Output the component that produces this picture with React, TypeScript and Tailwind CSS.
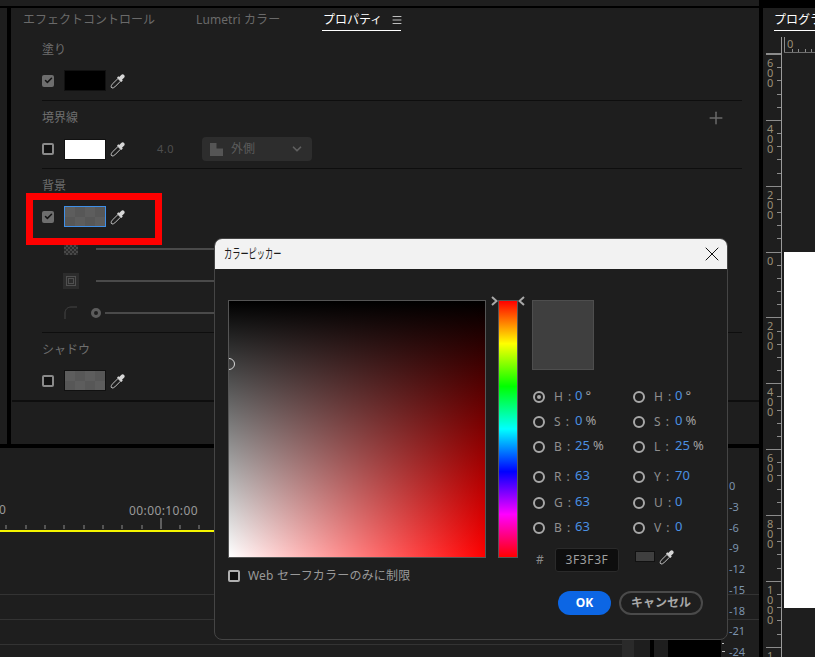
import React from "react";
import { X, Check, ChevronDown, Plus, Menu } from "lucide-react";

const Eyedropper = ({ className = "" }: { className?: string }) => (
  <svg viewBox="0 0 16 16" className={"w-[16px] h-[16px] shrink-0 " + className}>
    <path d="M2 15 L1.2 14.2 C1 13 1.5 12 2.2 11.2 L8 5.5 L10.6 8.1 L4.8 13.9 C4 14.6 3 15.1 2 15 Z" fill="none" stroke="#c4c4c4" strokeWidth="1" />
    <path d="M7 4.6 L8.4 3.2 L9.2 4 L11.2 2 C12 1.2 13.2 1 14.1 1.9 C15 2.8 14.8 4 14 4.8 L12 6.8 L12.8 7.6 L11.4 9 Z" fill="#d6d6d6" />
  </svg>
);

const Checkbox = ({ checked, light }: { checked?: boolean; light?: boolean }) =>
  checked ? (
    <div className="w-[12px] h-[12px] rounded-[2px] bg-[#6e6e6e] flex items-center justify-center shrink-0">
      <Check size={9} strokeWidth={4} className="text-[#151515]" />
    </div>
  ) : (
    <div className={"w-[12px] h-[12px] rounded-[2px] border-2 bg-[#111111] shrink-0 " + (light ? "border-[#b0b0b0]" : "border-[#8a8a8a]")} />
  );

// the checkered swatch
const Swatch = ({ active }: { active?: boolean }) => (
  <div
    className={
      "w-[42px] h-[21px] shrink-0 border bg-[#5a5a5a] bg-[conic-gradient(#575757_25%,#5d5d5d_0_50%,#575757_0_75%,#5d5d5d_0)] bg-[length:20px_20px] " +
      (active ? "border-[#3f8fe8]" : "border-[#111111]")
    }
  />
);

const Label = ({ children }: { children: React.ReactNode }) => (
  <div className="h-[16px] leading-[16px] text-[12px] text-[#6f6f6f]">{children}</div>
);

const Line = () => <div className="h-px bg-[#0e0e0e] w-[700px]" />;

const Ruler = ({ n }: { n: string }) => (
  <div className="h-[65.85px] shrink-0 border-t border-[#8c8c8c] w-[15px] flex">
    <div className="flex-1 flex flex-col pt-[3px] pl-[1px]">
      {n.split("").map((c, i) => (
        <span key={i} className="h-[10px] leading-[10px] text-[11px] text-[#9a8f78]">
          {c}
        </span>
      ))}
    </div>
    <div className="w-[4px] flex flex-col pt-[12.2px] gap-[12.2px]">
      {[0, 1, 2, 3].map((t) => (
        <div key={t} className="h-px bg-[#8c8c8c]" />
      ))}
    </div>
  </div>
);

const Field = ({ k, v, u, on }: { k: string; v: string; u?: string; on?: boolean }) => (
  <div className="flex items-center h-[16px] w-[100px]">
    <div className="w-[12px] h-[12px] rounded-full border-[2.5px] border-[#a8a8a8] bg-[#1e1e1e] flex items-center justify-center shrink-0">
      {on && <div className="w-[4px] h-[4px] rounded-full bg-[#a8a8a8]" />}
    </div>
    <span className="ml-[9px] text-[12px] text-[#8f8f8f] w-[21px] tracking-[1px] whitespace-nowrap">{k} :</span>
    <span className="-mt-[2px] text-[13px] text-[#4a90e2]">{v}</span>
    {u && <span className="-mt-[2px] ml-[3px] text-[13px] text-[#a0a0a0]">{u}</span>}
  </div>
);

const ticks = [6, 26, 45, 64, 84, 103, 122, 142, 180, 199];
const meter = ["0", "-3", "-6", "-9", "-12", "-15", "-18", "-21", "-24"];

const ColorPicker = () => (
  <div className="absolute left-[214px] top-[238px] w-[514px] h-[402px] rounded-[8px] border border-[#454545] bg-[#1e1e1e] overflow-hidden">
    <div className="h-[30px] bg-[#f2f2f2] flex items-center justify-between pl-[9px] pr-[3px]">
      <span className="text-[13px] text-[#1a1a1a] origin-left scale-x-[0.63] whitespace-nowrap">カラーピッカー</span>
      <X size={24} strokeWidth={1} className="text-[#111111]" />
    </div>
    <div className="flex pl-[13px] pt-[31px]">
      <div className="w-[258px]">
        <div className="relative w-[258px] h-[258px] border border-[#555555] overflow-hidden bg-[linear-gradient(to_bottom,#000,transparent),linear-gradient(to_right,#fff,#f00)]">
          <div className="absolute left-[-6px] top-[57px] w-[12px] h-[12px] rounded-full border-[1.5px] border-[#d8d8d8]" />
        </div>
        <div className="flex items-center mt-[11px] h-[14px]">
          <Checkbox light />
          <span className="ml-[8px] text-[12px] text-[#999999] tracking-[0.2px] whitespace-nowrap">Web セーフカラーのみに制限</span>
        </div>
      </div>
      <div className="relative ml-[12px] w-[20px] h-[258px] border border-[#555555] bg-[linear-gradient(to_bottom,#f00,#ff0,#0f0,#0ff,#00f,#f0f,#f00)]">
        <svg viewBox="0 0 7 10" className="absolute left-[-8px] top-[-5px] w-[7px] h-[10px]">
          <path d="M1 1L5.5 5L1 9" fill="none" stroke="#a8a8a8" strokeWidth="2" />
        </svg>
        <svg viewBox="0 0 7 10" className="absolute left-[19px] top-[-5px] w-[7px] h-[10px]">
          <path d="M6 1L1.5 5L6 9" fill="none" stroke="#a8a8a8" strokeWidth="2" />
        </svg>
      </div>
      <div className="ml-[14px] w-[181px]">
        <div className="w-[62px] h-[70px] bg-[#3f3f3f] border border-[#4e4e4e]" />
        <div className="mt-[19px] ml-[1px] grid grid-cols-[100px_100px] gap-y-[9px]">
          <Field k="H" v="0" u="°" on />
          <Field k="H" v="0" u="°" />
          <Field k="S" v="0" u="%" />
          <Field k="S" v="0" u="%" />
          <Field k="B" v="25" u="%" />
          <Field k="L" v="25" u="%" />
        </div>
        <div className="mt-[14px] ml-[1px] grid grid-cols-[100px_100px] gap-y-[9.5px]">
          <Field k="R" v="63" />
          <Field k="Y" v="70" />
          <Field k="G" v="63" />
          <Field k="U" v="0" />
          <Field k="B" v="63" />
          <Field k="V" v="0" />
        </div>
        <div className="flex items-center mt-[12px] h-[24px]">
          <span className="ml-[4px] w-[19px] text-[12px] text-[#8a8a8a]">#</span>
          <div className="w-[64px] h-[24px] rounded-[3px] bg-[#0e0e0e] border border-[#2a2a2a] flex items-center justify-center text-[12px] text-[#a0a0a0] tracking-[0.6px]">
            3F3F3F
          </div>
          <div className="ml-[16px] -mt-[7px] w-[20px] h-[11px] bg-[#3f3f3f] border border-[#111111]" />
          <Eyedropper className="ml-[4px] -mt-[6px]" />
        </div>
        <div className="flex mt-[19px] ml-[26px] gap-[8px]">
          <div className="w-[53px] h-[24px] rounded-full bg-[#0c66e4] flex items-center justify-center text-[12px] font-bold text-white">OK</div>
          <div className="w-[84px] h-[24px] rounded-full border-2 border-[#4a4a4a] flex items-center justify-center text-[12px] font-bold text-[#a8a8a8]">キャンセル</div>
        </div>
      </div>
    </div>
  </div>
);

export default function App() {
  return (
    <div
      className="relative w-[815px] h-[657px] bg-black overflow-hidden flex"
      style={{ fontFamily: '"Noto Sans", "Noto Sans CJK JP", sans-serif' }}
    >
      <div className="w-[759px] shrink-0 flex flex-col">
        <div className="h-[6px] bg-[#1e1e1e] shrink-0" />
        <div className="h-[436px] mt-[2px] flex shrink-0">
          <div className="w-[7px] bg-[#1e1e1e]" />
          <div className="ml-[4px] w-[748px] bg-[#1e1e1e]">
            <div className="h-[24px] flex items-start pt-[3px] pl-[12px] text-[12px] leading-[17px] text-[#6a6a6a]">
              <span className="w-[173px] whitespace-nowrap">エフェクトコントロール</span>
              <span className="w-[126px] tracking-[0.1px] whitespace-nowrap">Lumetri カラー</span>
              <div className="flex items-start border-b border-white h-[20px] w-[79px]">
                <span className="pl-[1px] text-white whitespace-nowrap">プロパティ</span>
                <Menu size={12} className="ml-[9px] mt-[3px] shrink-0 text-[#bdbdbd]" />
              </div>
            </div>
            <div className="pl-[31px] pt-[10px]">
              <Label>塗り</Label>
              <div className="flex items-center h-[21px] mt-[12px]">
                <Checkbox checked />
                <div className="ml-[10px] w-[42px] h-[21px] bg-black border border-[#111111]" />
                <Eyedropper className="ml-[4px]" />
              </div>
              <div className="mt-[9px]"><Line /></div>
              <div className="mt-[9px] flex justify-between w-[684px]">
                <Label>境界線</Label>
                <Plus size={20} strokeWidth={1.8} className="-mt-[2px] text-[#6a6a6a]" />
              </div>
              <div className="flex items-center h-[24px] mt-[9px]">
                <Checkbox />
                <div className="ml-[10px] w-[42px] h-[21px] bg-white border border-[#111111]" />
                <Eyedropper className="ml-[4px]" />
                <span className="ml-[31px] text-[11px] text-[#4e4e4e] tracking-[0.5px]">4.0</span>
                <div className="ml-[28px] w-[110px] h-[24px] rounded-[4px] bg-[#2d2d2d] flex items-center px-[8px] text-[12px] text-[#5c5c5c]">
                  <svg viewBox="0 0 12 12" className="w-[13px] h-[13px] shrink-0">
                    <path d="M0 0H6V5H12V12H0Z" fill="#555555" />
                  </svg>
                  <span className="ml-[8px]">外側</span>
                  <ChevronDown size={14} strokeWidth={3} className="ml-auto text-[#5f5f5f]" />
                </div>
              </div>
              <div className="mt-[7px]"><Line /></div>
              <div className="mt-[9px]"><Label>背景</Label></div>
              <div className="flex items-center h-[21px] mt-[12px]">
                <Checkbox checked />
                <div className="ml-[10px]"><Swatch active /></div>
                <Eyedropper className="ml-[4px]" />
              </div>
              <div className="flex items-center h-[22px] mt-[11px] pl-[22px]">
                <div className="w-[14px] h-[12px] bg-[conic-gradient(#2c2c2c_25%,#484848_0_50%,#2c2c2c_0_75%,#484848_0)] bg-[length:4px_4px]" />
                <div className="ml-[18px] w-[150px] h-[2px] bg-[#4a4a4a]" />
              </div>
              <div className="flex items-center h-[16px] mt-[13px] pl-[21px]">
                <div className="w-[16px] h-[16px] bg-[#2c2c2c] flex items-center justify-center">
                  <div className="w-[10px] h-[10px] border border-[#505050] flex items-center justify-center">
                    <div className="w-[6px] h-[6px] border border-[#505050]" />
                  </div>
                </div>
                <div className="ml-[17px] w-[150px] h-[2px] bg-[#4a4a4a]" />
              </div>
              <div className="flex items-center h-[16px] mt-[16px] pl-[22px]">
                <svg viewBox="0 0 14 14" className="w-[14px] h-[14px] shrink-0">
                  <path d="M1 13V7C1 3.5 3.5 1 7 1H13" fill="none" stroke="#444444" strokeWidth="1" />
                </svg>
                <div className="ml-[13px] w-[10px] h-[10px] rounded-full border-[3px] border-[#5c5c5c] shrink-0" />
                <div className="ml-[4px] w-[140px] h-[2px] bg-[#4a4a4a]" />
              </div>
              <div className="mt-[11px]"><Line /></div>
              <div className="mt-[9px]"><Label>シャドウ</Label></div>
              <div className="flex items-center h-[21px] mt-[12px]">
                <Checkbox />
                <div className="ml-[10px]"><Swatch /></div>
                <Eyedropper className="ml-[4px]" />
              </div>
            </div>
            <div className="mt-[9px] ml-[1px] h-[2px] bg-[#0e0e0e]" />
          </div>
        </div>
        <div className="mt-[4px] flex-1 bg-[#1e1e1e] relative">
          <div className="pt-[56px] pl-[129px] h-[70px] text-[12px] leading-[14px] text-[#9a9a9a] tracking-[0.4px]">00:00:10:00</div>
          <svg viewBox="0 0 214 12" className="w-[214px] h-[12px] block">
            {ticks.map((x) => (
              <line key={x} x1={x} x2={x} y1={7} y2={11} stroke="#8a8a8a" />
            ))}
            <line x1={161} x2={161} y1={0} y2={11} stroke="#a0a0a0" />
          </svg>
          <div className="h-[2px] w-[215px] bg-[#f5f500]" />
          <div className="mt-[62px] h-px bg-[#333333]" />
          <div className="mt-[24px] h-px bg-[#333333]" />
          <div className="mt-[24px] h-px w-[622px] bg-[#333333]" />
          <div className="absolute left-[-1px] top-[55px] text-[12px] leading-[14px] text-[#9a9a9a]">0</div>
          {/* bits of the track area that show under the dialog */}
          <div className="absolute left-[622px] top-[192px] w-[12px] h-[17px] bg-[#2a2a2a]" />
          <div className="absolute left-[650px] top-[192px] w-[4px] h-[17px] bg-black" />
          <div className="absolute left-[668px] top-[192px] w-[53px] h-[17px] bg-black" />
          <div className="absolute left-[722px] top-[195px] w-[2px] h-px bg-[#bdbdbd]" />
          <div className="absolute left-[722px] top-[203px] w-[3px] h-px bg-[#bdbdbd]" />
          <div className="absolute left-[729px] top-[28px] flex flex-col">
            {meter.map((m) => (
              <span key={m} className="h-[20.75px] leading-[20px] text-[11px] text-[#7c93ad]">{m}</span>
            ))}
          </div>
        </div>
      </div>
      <div className="ml-[4px] w-[52px] bg-[#1e1e1e] mt-[8px] flex flex-col overflow-hidden">
        <div className="h-[23px] ml-[11px] border-b border-white text-[12px] leading-[23px] text-white whitespace-nowrap overflow-hidden">プログラム</div>
        <div className="flex flex-1 overflow-hidden">
          <div className="mt-[6px] w-[19px] shrink-0 flex flex-col items-end pt-[16px] border-r border-[#9a9a9a]">
            <div className="h-px w-[15px] shrink-0 bg-[#8c8c8c]" />
            {["600", "400", "200", "0", "200", "400", "600", "800", "1000", "1"].map((n, i) => (
              <Ruler key={i} n={n} />
            ))}
          </div>
          <div className="flex-1 flex flex-col mt-[6px]">
            <div className="relative h-[16px] pl-[5px] text-[11px] leading-[13px] text-[#9a8f78]">
              <svg viewBox="0 0 33 16" className="absolute left-0 top-0 w-[33px] h-[16px]">
                <line x1={2.5} x2={2.5} y1={0} y2={15} stroke="#8c8c8c" />
                <line x1={2} x2={33} y1={15.5} y2={15.5} stroke="#6e6e6e" />
                {[10.5, 16.5, 23.5, 29.5].map((x) => (
                  <line key={x} x1={x} x2={x} y1={12} y2={15} stroke="#8c8c8c" />
                ))}
              </svg>
              0
            </div>
            <div className="h-[199px]" />
            <div className="ml-[2px] h-[356px] bg-white" />
          </div>
        </div>
      </div>
      {/* red highlight */}
      <div className="absolute left-[26px] top-[193px] w-[136px] h-[52px] border-[7px] border-[#ff0000]" />
      <ColorPicker />
    </div>
  );
}
